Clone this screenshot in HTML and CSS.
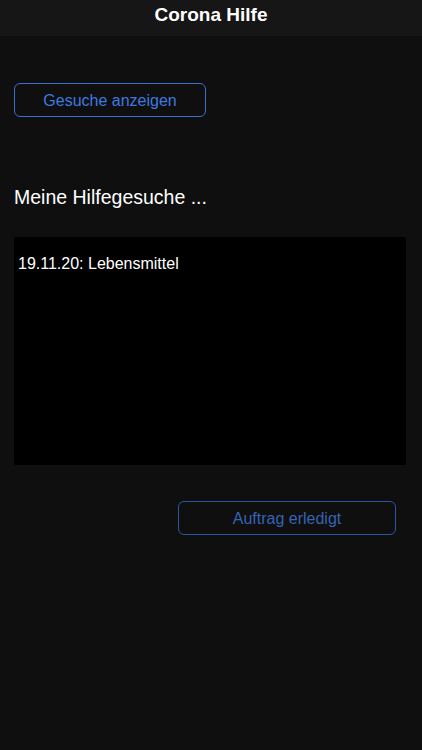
FILE: index.html
```html
<!DOCTYPE html>
<html lang="de">
<head>
<meta charset="utf-8">
<link rel="stylesheet" href="styles.css">
</head>
<body>
<header class="nav">Corona Hilfe</header>
<main class="content">
  <button class="btn btn-primary">Gesuche anzeigen</button>
  <h2 class="heading">Meine Hilfegesuche ...</h2>
  <div class="list">
    <div class="item">19.11.20: Lebensmittel</div>
  </div>
  <div class="actions">
    <button class="btn btn-done">Auftrag erledigt</button>
  </div>
</main>
</body>
</html>
```
FILE: styles.css
```css
html, body {
  margin: 0;
  padding: 0;
  background: #0f0f0f;
  height: 100%;
}
body {
  font-family: "Liberation Sans", Arial, sans-serif;
  color: #ffffff;
  width: 422px;
  height: 750px;
  overflow: hidden;
}
.nav {
  height: 36px;
  background: #161616;
  display: flex;
  justify-content: center;
  align-items: flex-start;
  padding-top: 4px;
  box-sizing: border-box;
  font-weight: bold;
  font-size: 19px;
  line-height: 22px;
}
.content {
  padding: 47px 16px 0 14px;
  display: flex;
  flex-direction: column;
}
.btn {
  font-family: "Liberation Sans", Arial, sans-serif;
  background: transparent;
  border-radius: 6px;
  font-size: 16px;
  box-sizing: border-box;
  cursor: pointer;
  padding: 2px 0 0 0;
}
.btn-primary {
  width: 192px;
  height: 34px;
  border: 1.5px solid #3a6fd0;
  color: #3d7ae0;
}
.heading {
  margin: 68px 0 0 0;
  font-weight: normal;
  font-size: 19.5px;
  line-height: 24px;
}
.list {
  margin-top: 28px;
  height: 228px;
  background: #000000;
  border-radius: 2px;
}
.item {
  padding: 17px 0 0 4px;
  font-size: 16px;
  line-height: 19px;
}
.actions {
  display: flex;
  justify-content: flex-end;
  margin-top: 36px;
  padding-right: 10px;
}
.btn-done {
  width: 218px;
  height: 34px;
  border: 1.5px solid #2b57a2;
  color: #3563b5;
}
```
